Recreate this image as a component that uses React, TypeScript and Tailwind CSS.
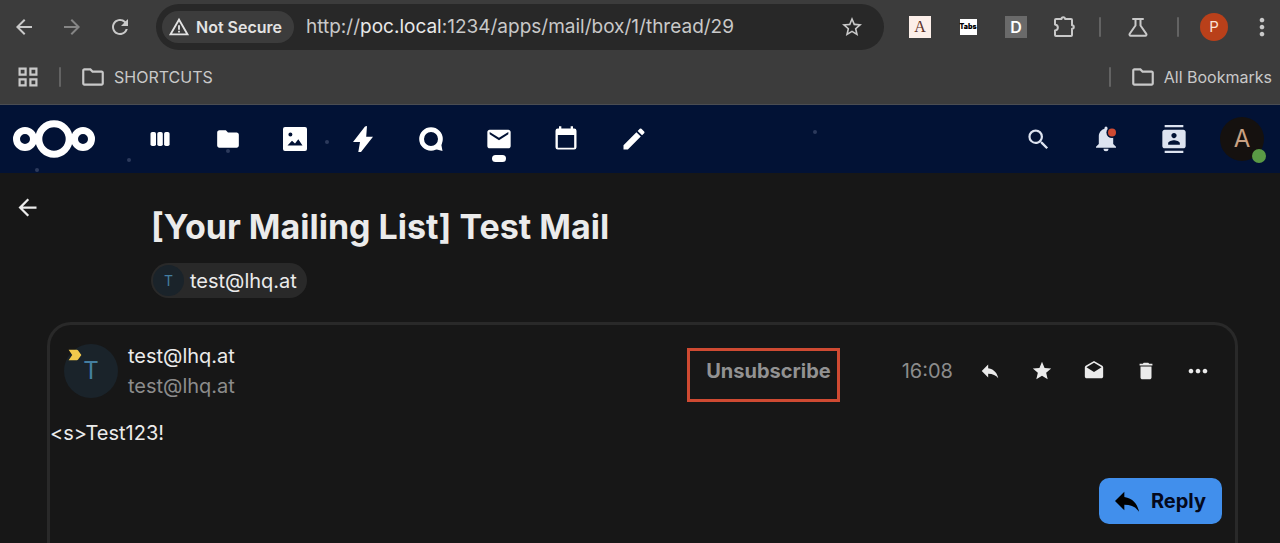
import type { ReactNode } from 'react'
import {
    MdArrowBack,
    MdArrowForward,
    MdContacts,
    MdDelete,
    MdDrafts,
    MdEdit,
    MdFolder,
    MdLabelImportant,
    MdMail,
    MdMoreHoriz,
    MdMoreVert,
    MdOutlineFolder,
    MdRefresh,
    MdReply,
    MdSearch,
    MdStar,
    MdStarBorder,
    MdWarningAmber,
} from 'react-icons/md'

interface NavApp {
    name: string
    icon: ReactNode
    active?: boolean
}

const apps: NavApp[] = [
    {
        name: 'Dashboard',
        icon: (
            <svg viewBox="0 0 20 14" className="h-3.5 w-5" fill="currentColor">
                <rect x="0.5" width="5.5" height="14" rx="1.8" />
                <rect x="7.3" width="5.5" height="14" rx="1.8" />
                <rect x="14.1" width="5.5" height="14" rx="1.8" />
            </svg>
        ),
    },
    { name: 'Files', icon: <MdFolder className="size-[26px]" /> },
    {
        name: 'Photos',
        icon: (
            <svg viewBox="0 0 24 24" className="size-6" fill="currentColor" fillRule="evenodd">
                <path d="M2 0h20a2 2 0 0 1 2 2v20a2 2 0 0 1-2 2H2a2 2 0 0 1-2-2V2a2 2 0 0 1 2-2zM7.400 5.500a2 2 0 1 0 0 4a2 2 0 0 0 0-4zM4.500 18.500h15l-4.200-6.200l-3.300 4.200l-3-2.800z" />
            </svg>
        ),
    },
    {
        name: 'Activity',
        icon: (
            <svg viewBox="0 0 20 26" className="h-[26px] w-5" fill="currentColor">
                <path d="M12 0.500L0 16h7L5.300 26h2.700L20 10.800h-6.800L14 0z" />
            </svg>
        ),
    },
    {
        name: 'Talk',
        icon: (
            <svg viewBox="0 0 24 24" className="size-6" fill="none" stroke="currentColor">
                <circle cx="12" cy="12" r="9.400" strokeWidth="4.800" />
                <path d="M16 22l7.500 2l-1.500-8z" fill="currentColor" stroke="none" />
            </svg>
        ),
    },
    { name: 'Mail', icon: <MdMail className="size-7" />, active: true },
    {
        name: 'Calendar',
        icon: (
            <svg viewBox="0 0 24 24" className="size-7" fill="currentColor">
                <path d="M19 19.500H5V8.500h14M16 1v2H8V1H6v2H5a2 2 0 0 0-2 2v14a2 2 0 0 0 2 2h14a2 2 0 0 0 2-2V5a2 2 0 0 0-2-2h-1V1" />
            </svg>
        ),
    },
    { name: 'Notes', icon: <MdEdit className="size-7" /> },
]

const messageActions = [
    { name: 'Reply to sender', icon: <MdReply className="size-[22px]" /> },
    { name: 'Favorite', icon: <MdStar className="size-[22px]" /> },
    { name: 'Mark as unread', icon: <MdDrafts className="size-[22px]" /> },
    { name: 'Delete', icon: <MdDelete className="size-[22px]" /> },
    { name: 'More actions', icon: <MdMoreHoriz className="size-7" /> },
]

function BarButton({ label, className = 'w-12', children }: { label: string; className?: string; children: ReactNode }) {
    return (
        <button type="button" aria-label={label} className={`flex shrink-0 items-center justify-center ${className}`}>
            {children}
        </button>
    )
}

function Separator({ className = 'w-6' }: { className?: string }) {
    return (
        <div className={`flex shrink-0 justify-center ${className}`}>
            <div className="h-5 w-0.5 rounded bg-[#636363]" />
        </div>
    )
}

function BrowserToolbar() {
    return (
        <div className="flex h-[54px] items-center text-[#c9c9c9]">
            <BarButton label="Back"><MdArrowBack className="size-6" /></BarButton>
            <BarButton label="Forward"><MdArrowForward className="size-6 text-[#858585]" /></BarButton>
            <BarButton label="Reload"><MdRefresh className="size-6" /></BarButton>

            <div className="ml-3 flex h-[46px] min-w-0 flex-1 items-center rounded-full bg-[#282828] pl-1.5">
                <button type="button" className="flex h-8 shrink-0 items-center gap-1.5 rounded-full bg-[#3c3c3c] pr-3 pl-1.5 text-base font-semibold text-[#e3e3e3]">
                    <MdWarningAmber className="size-[22px]" />
                    Not Secure
                </button>
                <div className="ml-3 min-w-0 flex-1 truncate text-[19px]">
                    http://<span className="text-[#e8e8e8]">poc.local</span>:1234/apps/mail/box/1/thread/29
                </div>
                <BarButton label="Bookmark this tab" className="mr-2 w-12"><MdStarBorder className="size-6" /></BarButton>
            </div>

            <div className="ml-3 flex items-center">
                <BarButton label="Reader extension">
                    <span className="flex size-[22px] items-center justify-center bg-[#fcefe9] font-['Liberation_Serif',serif] text-base text-[#5b2f27]">A</span>
                </BarButton>
                <BarButton label="Tabs extension">
                    <span className="flex h-4 w-[17px] items-center justify-center bg-white text-[7px] font-black text-black">Tabs</span>
                </BarButton>
                <BarButton label="D extension">
                    <span className="flex size-[22px] items-center justify-center bg-[#6a6a6a] text-base font-semibold text-white">D</span>
                </BarButton>
                <BarButton label="Extensions">
                    <svg viewBox="0 0 24 24" className="size-6" fill="none" stroke="currentColor" strokeWidth="2" strokeLinejoin="round">
                        <path d="M4 4h5.500a1.800 1.800 0 0 1 3.600 0H19a1 1 0 0 1 1 1v5.200a1.800 1.800 0 0 1 0 3.600V20a1 1 0 0 1-1 1H4a1 1 0 0 1-1-1v-4.500c3.800-.5 3.800-5.500 0-6V5a1 1 0 0 1 1-1z" />
                    </svg>
                </BarButton>
                <Separator />
                <BarButton label="Labs" className="w-13">
                    <svg viewBox="0 0 20 20" className="size-5" fill="none" stroke="currentColor" strokeWidth="2" strokeLinejoin="round">
                        <path d="M5 2h10M7.500 2v6.500L1.700 16.800a1.200 1.200 0 0 0 1 1.900h14.600a1.200 1.200 0 0 0 1-1.900L12.500 8.500V2" strokeLinecap="round" />
                    </svg>
                </BarButton>
                <Separator className="w-7" />
                <BarButton label="Profile" className="w-11">
                    <span className="flex size-7 items-center justify-center rounded-full bg-[#b9401a] text-[15px] text-[#fbe3d8]">P</span>
                </BarButton>
                <BarButton label="Browser menu" className="ml-2 w-9"><MdMoreVert className="size-7" /></BarButton>
            </div>
        </div>
    )
}

function BookmarksBar() {
    return (
        <div className="flex h-[51px] items-center justify-between border-b border-[#4b4d52] pr-2 pb-1 pl-[18px] text-base text-[#c9c9c9]">
            <div className="flex items-center">
                <button type="button" aria-label="Apps">
                    <svg viewBox="0 0 20 20" className="size-5" fill="none" stroke="currentColor" strokeWidth="2.200">
                        <path d="M1.600 1.600h6v6h-6zM12.400 1.600h6v6h-6zM1.600 12.400h6v6h-6zM12.400 12.400h6v6h-6z" />
                    </svg>
                </button>
                <Separator className="ml-2.5 w-6" />
                <a href="#shortcuts" className="ml-2 flex items-center gap-2">
                    <MdOutlineFolder className="size-[26px]" />
                    SHORTCUTS
                </a>
            </div>
            <div className="flex items-center">
                <Separator />
                <a href="#bookmarks" className="ml-2 flex items-center gap-2">
                    <MdOutlineFolder className="size-[26px]" />
                    All Bookmarks
                </a>
            </div>
        </div>
    )
}

function AppHeader() {
    return (
        <header className="relative flex h-[68px] items-center bg-[#021235] pr-1 pl-3 text-white">
            {/* Faint stars of the header background */}
            <svg className="pointer-events-none absolute inset-0 h-full w-full" fill="#2c3a5c">
                <circle cx="37" cy="65" r="2" />
                <circle cx="129" cy="55" r="2" />
                <circle cx="228" cy="46" r="2" />
                <circle cx="327" cy="37" r="2" />
                <circle cx="815" cy="27" r="2" />
            </svg>

            <a href="#home" aria-label="Home" className="shrink-0">
                <svg viewBox="0 0 84 38" className="h-[38px] w-[84px]" fill="none" stroke="white" strokeWidth="7">
                    <circle cx="13" cy="19" r="8.500" />
                    <circle cx="42" cy="19" r="15.200" />
                    <circle cx="71" cy="19" r="8.500" />
                </svg>
            </a>

            <nav className="ml-[30px] grid w-[542px] grid-cols-8">
                {apps.map((app) => (
                    <a key={app.name} href="#app" aria-label={app.name} className="relative flex h-[68px] items-center justify-center">
                        {app.icon}
                        {app.active && <span className="absolute bottom-[11px] h-[7px] w-3.5 rounded-full bg-white" />}
                    </a>
                ))}
            </nav>

            <div className="ml-auto flex items-center text-[#dde3f0]">
                <BarButton label="Search" className="w-17"><MdSearch className="size-[27px]" /></BarButton>
                <BarButton label="Notifications" className="w-17">
                    <svg viewBox="0 0 24 26" className="h-[26px] w-6" fill="currentColor">
                        <path d="M10.500 2a1.500 1.500 0 0 1 3 0v.8c3.500 1 5.700 4 5.700 7.700v7.500l2.800 2.800v1H2v-1L4.800 18v-7.500c0-3.700 2.200-6.700 5.700-7.700zM9.500 22.800h5a2.500 2.500 0 0 1-5 0z" />
                        <circle cx="18" cy="6.500" r="5.600" fill="#021235" />
                        <circle cx="18" cy="6.500" r="4" fill="#cf4a32" />
                    </svg>
                </BarButton>
                <BarButton label="Contacts" className="w-17"><MdContacts className="size-7" /></BarButton>
                <BarButton label="Account" className="w-17">
                    <span className="relative flex size-11 items-center justify-center rounded-full bg-[#15110f] text-2xl text-[#c9a183]">
                        A
                        <span className="absolute -right-0.5 -bottom-0.5 size-3.5 rounded-full bg-[#5a9a45]" />
                    </span>
                </BarButton>
            </div>
        </header>
    )
}

function Message() {
    return (
        <article className="mr-[42px] ml-[47px] flex-1 rounded-t-3xl border-[3px] border-b-0 border-[#292929]">
            <div className="flex items-center pt-[15px] pr-[11px] pl-3.5">
                <div className="relative flex size-[54px] shrink-0 items-center justify-center rounded-full bg-[#1a232a] text-2xl text-[#447ea0]">
                    T
                    <MdLabelImportant className="absolute top-0.5 left-0.5 size-[18px] text-[#f2c94c]" />
                </div>
                <div className="ml-2.5 text-xl leading-[30px]">
                    <div className="text-[#ebebeb]">test@lhq.at</div>
                    <div className="text-[#8c8c8c]">test@lhq.at</div>
                </div>
                <div className="ml-auto flex items-center">
                    <button type="button" className="mt-2 h-[54px] border-[3px] border-[#cf4a32] pr-1.5 pb-2 pl-4 text-xl font-bold text-[#929292]">
                        Unsubscribe
                    </button>
                    <time className="ml-[62px] text-xl text-[#8c8c8c]">16:08</time>
                    <div className="ml-[11px] flex text-[#ebebeb]">
                        {messageActions.map((action) => (
                            <BarButton key={action.name} label={action.name} className="h-11 w-13">
                                {action.icon}
                            </BarButton>
                        ))}
                    </div>
                </div>
            </div>

            <p className="mt-4 text-xl leading-[30px] text-[#ebebeb]">&lt;s&gt;Test123!</p>

            <div className="mt-[30px] flex justify-end pr-[13px] pb-5">
                <button type="button" className="flex h-[46px] items-center gap-2 rounded-[10px] bg-[#418fec] pr-4 pl-3 text-xl font-bold text-[#04091c]">
                    <MdReply className="size-8 text-black" />
                    Reply
                </button>
            </div>
        </article>
    )
}

export default function App() {
    return (
        <div className="flex min-h-screen flex-col bg-[#171717] font-['Inter',sans-serif]">
            <div className="bg-[#3c3c3c]">
                <BrowserToolbar />
                <BookmarksBar />
            </div>
            <AppHeader />
            <main className="flex flex-1 flex-col">
                <div className="flex items-start pt-5">
                    <BarButton label="Back to mailbox" className="ml-[3px] h-7 w-12">
                        <MdArrowBack className="size-[27px] text-[#ebebeb]" />
                    </BarButton>
                    <div className="ml-[100px] pt-3">
                        <h1 className="text-[34px] leading-[44px] font-bold text-[#ebebeb]">[Your Mailing List] Test Mail</h1>
                        <div className="mt-3.5 flex h-[35px] w-fit items-center gap-1.5 rounded-full bg-[#292929] pr-2.5 pl-0.5 text-xl text-[#ebebeb]">
                            <span className="flex size-[31px] items-center justify-center rounded-full bg-[#1a232a] text-sm text-[#447ea0]">T</span>
                            test@lhq.at
                        </div>
                    </div>
                </div>
                <div className="mt-6 flex flex-1 flex-col">
                    <Message />
                </div>
            </main>
        </div>
    )
}
